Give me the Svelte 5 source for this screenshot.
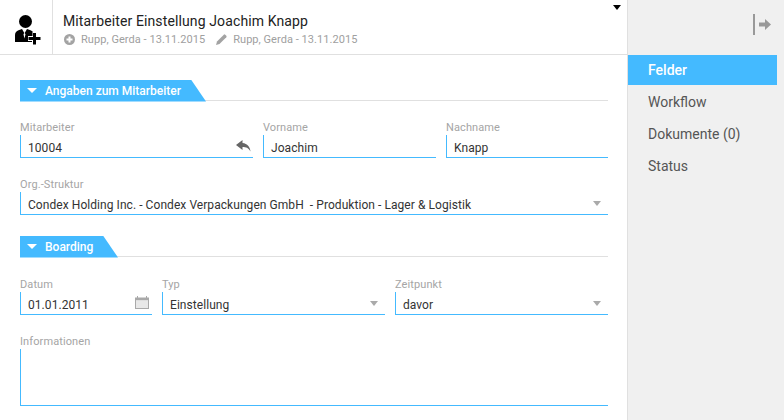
<script>
  const menu = ['Felder', 'Workflow', 'Dokumente (0)', 'Status'];
</script>

<div class="page">
  <main class="main">
    <header class="head">
      <div class="avatar">
        <svg width="26" height="30" viewBox="0 0 26 30">
          <circle cx="10.500" cy="6.500" r="6.500" fill="#000"/>
          <path fill="#000" d="M0 27v-7c0-2.500 1.500-4 3.500-4.700L7 14l2.300 4-.8 1.200.9 4.300 1.100-4.300-.8-1.200L12 14l3.500 1.300c2 .7 3.500 2.200 3.500 3.700v8z"/>
          <path d="M17.500 16.500h4.500V21h4v5h-4v4h-5v-4H13v-5h4.500z" fill="#fff"/>
          <path d="M18 18h3v4h4.500v3H21v4.500h-3V25h-4.500v-3H18z" fill="#000"/>
        </svg>
      </div>
      <div class="titles">
        <div class="title">Mitarbeiter Einstellung Joachim Knapp</div>
        <div class="meta">
          <svg class="mi" width="11" height="11" viewBox="0 0 11 11"><circle cx="5.500" cy="5.500" r="5.500" fill="#a3a3a3"/><path d="M4.500 2.500h2v2h2v2h-2v2h-2v-2h-2v-2h2z" fill="#fff"/></svg>
          <span class="mt">Rupp, Gerda - 13.11.2015</span>
          <svg class="mi pen" width="11" height="11" viewBox="0 0 11 11"><path d="M0 11l1-3.500L7.800.7a1 1 0 0 1 1.400 0l1.100 1.100a1 1 0 0 1 0 1.400L3.500 10z" fill="#a3a3a3"/></svg>
          <span class="mt">Rupp, Gerda - 13.11.2015</span>
        </div>
      </div>
      <span class="corner"></span>
    </header>

    <div class="body">
      <div class="section first">
        <div class="tab tab1"><span class="tri"></span>Angaben zum Mitarbeiter</div>
      </div>

      <div class="row r1">
        <div class="field f1">
          <span class="lbl">Mitarbeiter</span>
          <div class="box">10004
            <svg class="reply" width="15" height="12" viewBox="0 0 15 12"><path d="M6.500 0L0 5l6.500 5V7c3.500 0 6 .8 8 4.500C14 7 11.500 3.500 6.500 3z" fill="#666"/></svg>
          </div>
        </div>
        <div class="field f2"><span class="lbl">Vorname</span><div class="box">Joachim</div></div>
        <div class="field f3"><span class="lbl">Nachname</span><div class="box">Knapp</div></div>
      </div>

      <div class="row r2">
        <div class="field grow">
          <span class="lbl">Org.-Struktur</span>
          <div class="box">Condex Holding Inc. - Condex Verpackungen GmbH&nbsp; - Produktion - Lager &amp; Logistik<span class="caret"></span></div>
        </div>
      </div>

      <div class="section second">
        <div class="tab tab2"><span class="tri"></span>Boarding</div>
      </div>

      <div class="row r3">
        <div class="field d1">
          <span class="lbl">Datum</span>
          <div class="box">01.01.2011
            <svg class="cal" width="14" height="13" viewBox="0 0 14 13"><path d="M0 1.500h2V0h1v1.500h8V0h1v1.500h2V13H0zM1 4.500V12h12V4.500z" fill="#a9a9a9" fill-rule="evenodd"/><rect x="1" y="4.500" width="12" height="7.500" fill="#e8e8e8"/></svg>
          </div>
        </div>
        <div class="field d2"><span class="lbl">Typ</span><div class="box">Einstellung<span class="caret"></span></div></div>
        <div class="field d3"><span class="lbl">Zeitpunkt</span><div class="box">davor<span class="caret"></span></div></div>
      </div>

      <div class="row r4">
        <div class="field grow">
          <span class="lbl">Informationen</span>
          <div class="box area"></div>
        </div>
      </div>
    </div>
  </main>

  <aside class="side">
    <div class="collapse">
      <svg width="18" height="21" viewBox="0 0 18 21"><rect x="0" y="0" width="2" height="21" fill="#999"/><path d="M6 8.500h6V5l6 5.500-6 5.500v-3.500H6z" fill="#999"/></svg>
    </div>
    <nav class="nav">
      {#each menu as item, i}
        <div class="item" class:on={i === 0}>{item}</div>
      {/each}
    </nav>
  </aside>
</div>

<style>
  :global(body) { margin: 0; background: #fff; }
  .page {
    display: flex;
    width: 784px;
    height: 420px;
    overflow: hidden;
    font-family: Roboto, "Liberation Sans", sans-serif;
    color: #333;
  }
  .main { width: 627px; flex: none; }
  .head {
    position: relative;
    display: flex;
    height: 54px;
    border-bottom: 1px solid #e0e0e0;
    box-sizing: content-box;
  }
  .avatar {
    width: 53px;
    flex: none;
    box-sizing: border-box;
    border-right: 1px solid #e0e0e0;
    padding: 15px 0 0 15px;
  }
  .titles { padding: 13px 0 0 10px; }
  .title { font-size: 14px; line-height: 16px; color: #222; letter-spacing: 0.12px; }
  .meta {
    display: flex;
    align-items: center;
    margin-top: 3px;
    height: 14px;
    font-size: 11px;
    letter-spacing: 0.05px;
    color: #a0a0a0;
  }
  .mi { flex: none; margin: 0 6px 0 1px; }
  .pen { margin: 0 6px 0 11px; }
  .corner {
    position: absolute;
    right: 6px;
    top: 5px;
    border: 4px solid transparent;
    border-top: 5px solid #000;
    border-bottom: 0;
  }
  .body { padding: 0 19px 0 20px; }
  .section { height: 22px; border-bottom: 1px solid #e0e0e0; }
  .first { margin-top: 23px; }
  .second { margin-top: 19px; }
  .tab {
    display: inline-flex;
    align-items: center;
    height: 22px;
    box-sizing: border-box;
    background: #44baff;
    color: #fff;
    font-size: 12px;
    font-weight: 500;
    white-space: nowrap;
    padding: 0 0 0 7px;
    clip-path: polygon(0 0, calc(100% - 15px) 0, 100% 100%, 0 100%);
  }
  .tab1 { width: 186px; }
  .tab2 { width: 98px; }
  .tri {
    width: 0;
    height: 0;
    border: 5px solid transparent;
    border-top: 5px solid #fff;
    border-bottom: 0;
    margin-right: 8px;
  }
  .row { display: flex; gap: 10px; }
  .r1 { margin-top: 20px; }
  .r2 { margin-top: 20px; }
  .r3 { margin-top: 21px; }
  .r4 { margin-top: 20px; }
  .field { display: flex; flex-direction: column; }
  .grow { flex: 1; }
  .f1 { width: 233px; }
  .f2 { width: 173px; }
  .f3 { width: 162px; }
  .d1 { width: 132px; }
  .d2 { width: 223px; }
  .d3 { width: 213px; }
  .lbl {
    font-size: 11px;
    letter-spacing: 0.1px;
    line-height: 14px;
    color: #a5a5a5;
    height: 14px;
  }
  .box {
    position: relative;
    height: 23px;
    box-sizing: border-box;
    border-left: 1px solid #44baff;
    border-bottom: 1px solid #44baff;
    padding-left: 7px;
    font-size: 12px;
    letter-spacing: 0.06px;
    line-height: 26px;
    color: #333;
    white-space: nowrap;
  }
  .area { height: 57px; }
  .caret {
    position: absolute;
    right: 7px;
    top: 9px;
    border: 4px solid transparent;
    border-top: 5px solid #aaa;
    border-bottom: 0;
  }
  .reply { position: absolute; right: 2px; top: 5px; }
  .cal { position: absolute; right: 3px; top: 4px; }

  .side {
    flex: 1;
    background: #f0f0f0;
    border-left: 1px solid #e0e0e0;
  }
  .collapse {
    height: 55px;
    display: flex;
    justify-content: flex-end;
    align-items: flex-start;
    padding: 14px 13px 0 0;
    box-sizing: border-box;
  }
  .item {
    height: 32px;
    line-height: 32px;
    padding-left: 20px;
    font-size: 14px;
    color: #555;
  }
  .on {
    width: 129px;
    background: #44baff;
    color: #fff;
    font-weight: 500;
    height: 30px;
    line-height: 30px;
    margin-bottom: 1px;
  }
</style>
